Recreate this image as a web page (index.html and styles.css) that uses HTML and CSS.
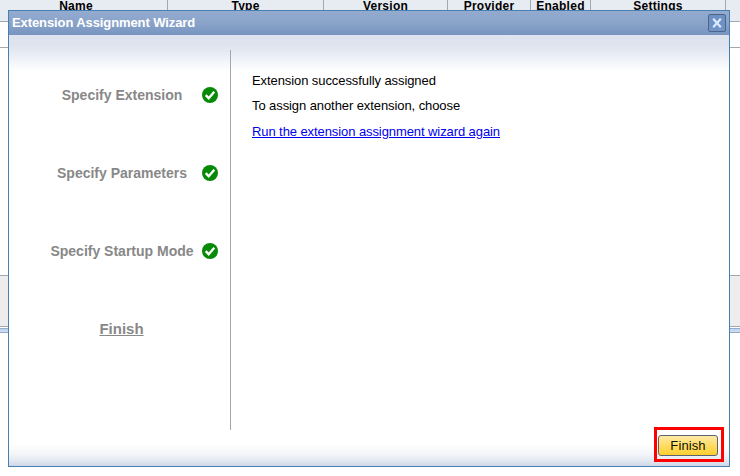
FILE: index.html
```
<!DOCTYPE html>
<html lang="en">
<head>
<meta charset="utf-8">
<title>Extension Assignment Wizard</title>
<link rel="stylesheet" href="styles.css">
</head>
<body>
<div class="page">
  <div class="thead">
    <div>Name</div><div>Type</div><div>Version</div><div>Provider</div><div>Enabled</div><div>Settings</div><div></div>
  </div>
  <div class="row"></div>
  <div class="space"></div>
  <div class="panel"></div>
  <div class="splitter"></div>
</div>
<section class="dialog">
  <header class="titlebar">
    <h1>Extension Assignment Wizard</h1>
    <button class="close" aria-label="Close">
      <svg width="10" height="10" viewBox="0 0 10 10"><path d="M1.2 0.8L8.8 9.2M8.8 0.8L1.2 9.2" fill="none" stroke="#dceaff" stroke-width="2.2"/></svg>
    </button>
  </header>
  <div class="body">
    <nav class="steps">
      <div class="step"><span>Specify Extension</span><svg class="check" viewBox="0 0 16 16"><circle cx="8" cy="8" r="8"/><path d="M3.7 8.2L6.7 11.2L12.3 4.8"/></svg></div>
      <div class="step"><span>Specify Parameters</span><svg class="check" viewBox="0 0 16 16"><circle cx="8" cy="8" r="8"/><path d="M3.7 8.2L6.7 11.2L12.3 4.8"/></svg></div>
      <div class="step"><span>Specify Startup Mode</span><svg class="check" viewBox="0 0 16 16"><circle cx="8" cy="8" r="8"/><path d="M3.7 8.2L6.7 11.2L12.3 4.8"/></svg></div>
      <div class="step"><span class="current">Finish</span></div>
    </nav>
    <main class="content">
      <p>Extension successfully assigned</p>
      <p>To assign another extension, choose</p>
      <p><a href="#">Run the extension assignment wizard again</a></p>
    </main>
  </div>
  <footer class="footer"><div class="highlight"><button class="finish">Finish</button></div></footer>
</section>
</body>
</html>
```
FILE: styles.css
```
* { box-sizing: border-box; }
body {
  margin: 0;
  width: 740px;
  height: 476px;
  overflow: hidden;
  background: #fff;
  font-family: "Liberation Sans", Arial, sans-serif;
}
.thead {
  display: grid;
  grid-template-columns: 168px 156px 124px 83px 60px 135px 1fr;
  height: 22px;
  background: #e7ebf2;
  border-bottom: 1px solid #a0a9b0;
  font-size: 12px;
  font-weight: bold;
  line-height: 12px;
  letter-spacing: .25px;
  text-align: center;
}
.thead div { border-right: 1px solid #a0a9b0; }
.thead div:first-child { padding-right: 15px; }
.thead div:last-child { border: 0; }
.row { height: 26px; border-bottom: 1px solid #a0a9b0; }
.space { height: 227px; }
.panel {
  height: 52px;
  background: #ededed;
  border-top: 1px solid #a0a9b0;
  border-bottom: 1px solid #a0a9b0;
}
.splitter {
  height: 5px;
  margin-top: 1px;
  background: linear-gradient(#bdd0ea, #d3e0f3);
  border-top: 1px solid #91add0;
  border-bottom: 1px solid #91a9c8;
}
.dialog {
  position: absolute;
  left: 8px;
  top: 10px;
  width: 722px;
  height: 457px;
  display: flex;
  flex-direction: column;
  border: 1px solid #477fb0;
  background: linear-gradient(#dee3ee 0, #dee3ee 34px, #e5e9f3 40px, #fff 60px, #fff 433px, #f4f5f9 443px, #e5e9f2 449px, #ced8e8 455px);
}
.titlebar {
  flex: none;
  height: 24px;
  display: flex;
  align-items: center;
  justify-content: space-between;
  padding: 0 3px;
  background: linear-gradient(#94abcf, #88a2c8 55%, #7794c0);
}
h1 { margin: 0; font-size: 13px; line-height: 24px; letter-spacing: -.1px; color: #fff; }
.close {
  width: 18px;
  height: 18px;
  padding: 0;
  display: flex;
  align-items: center;
  justify-content: center;
  border: 1px solid #4d6388;
  border-radius: 2px;
  background: linear-gradient(#6f90c2, #7094c7);
}
.body { height: 395px; display: flex; padding-top: 15px; }
.steps {
  width: 222px;
  border-right: 1px solid #a0a9b0;
  padding-top: 6px;
}
.step {
  height: 78px;
  display: flex;
  align-items: center;
  color: #888;
  font-size: 14px;
  font-weight: bold;
}
.step span { width: 193px; text-align: center; white-space: nowrap; padding-left: 33px; }
.step .current { text-decoration: underline; font-size: 15px; padding: 0 0 2px 32px; }
.check { width: 16px; height: 16px; flex: none; }
.check circle { fill: #078a07; }
.check path { fill: none; stroke: #fff; stroke-width: 2.4; }
.content { padding: 23px 0 0 21px; font-size: 13px; line-height: 15px; letter-spacing: -.085px; }
.content p { margin: 0 0 10px; }
.content p:nth-child(2) { margin-bottom: 11px; }
.content a { color: #00e; }
.footer { display: flex; justify-content: flex-end; padding-right: 5px; margin-top: -3px; }
.highlight { width: 70px; height: 35px; padding: 5px 3px 4px 1px; border: 3px solid #f00; }
.finish {
  display: block;
  width: 60px;
  height: 21px;
  padding: 0;
  border: 1px solid #5b6370;
  border-radius: 3px;
  background: linear-gradient(#ffeaa8, #ffdc62 50%, #ffcf30);
  color: #111;
  font: 13px "Liberation Sans", Arial, sans-serif;
  letter-spacing: .1px;
}
```
